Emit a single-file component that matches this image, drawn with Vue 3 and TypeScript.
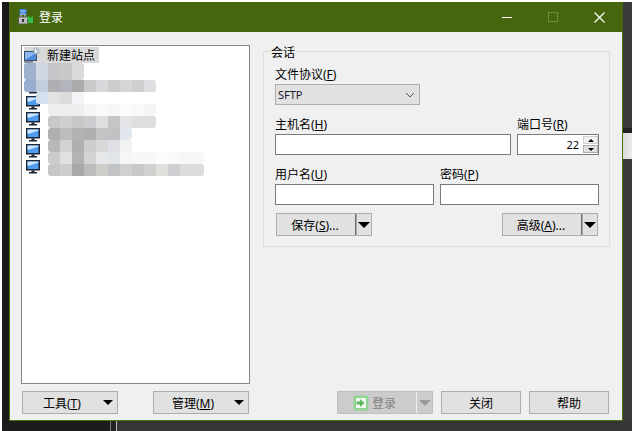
<script setup lang="ts">
interface MosaicRow { h: number; left: number; cells: string[] }

const mosaic: MosaicRow[] = [
  { h: 17, left: 2, cells: ['#9fb1cb', '#d0d6e2', '#c6c6ca', '#c8c8c8', '#dadada'] },
  { h: 12, left: 2, cells: ['#97aed0', '#c3cedd', '#b0b0b4', '#b3b5bc', '#acaaaa', '#cccac8', '#d8d8dc', '#cccccc', '#d8d6d5', '#d0cecc', '#dedfe3'] },
  { h: 12, left: 14, cells: ['#d5dfee', '#e2e2e2', '#dcdcdc', '#f3f4f7'] },
  { h: 12, left: 26, cells: ['#eeeeee', '#ededeb', '#eeeeee', '#f5f5f5', '#f9fafa', '#f5f6f6', '#fbfbfc', '#f9f9f7', '#f5f5f6'] },
  { h: 12, left: 26, cells: ['#c8c8c8', '#cfcfcf', '#c8c6c6', '#ccccd0', '#dedede', '#c6c4c4', '#e2e4e8', '#dedede', '#dedede'] },
  { h: 12, left: 26, cells: ['#b0b0b0', '#bdbdbd', '#b2b2b2', '#b0aeae', '#c2c3c5', '#c2c2c4', '#e2e6ed'] },
  { h: 12, left: 26, cells: ['#b8b8b8', '#d2d2d2', '#b0b0b0', '#cdcdcb', '#d8d8d8', '#dfe0e5', '#f1f2f4'] },
  { h: 12, left: 26, cells: ['#cccccc', '#e0e0e0', '#b3b3b3', '#d3d3d1', '#e6e7e9', '#e2e5ea', '#f6f6f7', '#f8f8f8', '#f8f8f8', '#fbfbfb', '#f9f9f9', '#f7f7f7', '#f7f7f7'] },
  { h: 12, left: 26, cells: ['#c6c6c6', '#cdcdcd', '#a9a9a9', '#bcbcbc', '#cfcdc9', '#c1c3c5', '#d0d0d0', '#c6c8ca', '#d2d0cf', '#e1dfdb', '#cdcfd2', '#dcdada', '#dcdcdc'] },
]

const sites = [1, 2, 3, 4, 5, 6, 7]
</script>

<template>
  <div class="screen">
    <div class="desk">
      <div class="strip-left"></div>
      <div class="window">
        <header class="titlebar">
          <svg class="app-icon" width="16" height="16" viewBox="0 0 16 16">
            <rect x="1.5" y="0" width="7" height="6" fill="#3f7fe0" />
            <rect x="2.5" y="1" width="5" height="2" fill="#7fb0f5" />
            <path d="M3 8V6.5a2 2 0 0 1 4 0V8" fill="none" stroke="#c9c9c9" stroke-width="1.2" />
            <rect x="0.5" y="8" width="9" height="7" fill="#bdbdbd" stroke="#555" stroke-width="0.8" />
            <rect x="4" y="10" width="2" height="3" fill="#333" />
            <path d="M9 8l2-1 1 2 3-2v7H9l2-2-2-2z" fill="#2fbf4a" />
          </svg>
          <span class="title-text">登录</span>
          <div class="controls">
            <div class="ctl"><span class="ctl-min"></span></div>
            <div class="ctl"><span class="ctl-max"></span></div>
            <div class="ctl">
              <svg width="11" height="11" viewBox="0 0 11 11">
                <path d="M0.5 0.5l10 10M10.5 0.5l-10 10" stroke="#fff" stroke-width="1.2" fill="none" />
              </svg>
            </div>
          </div>
        </header>

        <div class="body">
          <section class="left">
            <div class="tree">
              <div class="tree-row">
                <div class="tree-head">
                  <svg width="16" height="16" viewBox="0 0 16 16">
                    <rect x="0.5" y="4.5" width="12" height="9" fill="#8db8ee" stroke="#3b4d66" />
                    <path d="M1 13l11-7v7z" fill="#4d8ad8" />
                    <path d="M0 15h9" stroke="#3b4d66" />
                    <path d="M11.5 0.5l1 2 2.3-.4-1 2 1.4 1.6-2.3.2-1 2-1-2-2-.4 1.5-1.5-.6-2.2z" fill="#e8edf5" stroke="#7d8fa8" stroke-width="0.7" />
                  </svg>
                  <span class="tree-label">新建站点</span>
                </div>
              </div>
              <div v-for="s in sites" :key="s" class="tree-row">
                <svg class="monitor" width="14" height="14" viewBox="0 0 14 14">
                  <rect x="0.5" y="0.5" width="13" height="9.5" fill="#1d2733" stroke="#1d2733" />
                  <rect x="1.5" y="1.5" width="11" height="7.5" fill="#4f9cf0" />
                  <path d="M1.5 6l11-3.5V1.5h-11z" fill="#cfe6ff" />
                  <rect x="5.5" y="10.5" width="3" height="1.5" fill="#1d2733" />
                  <rect x="3" y="12" width="8" height="1.5" fill="#1d2733" />
                </svg>
              </div>
              <div class="mosaic">
                <div
                  v-for="(row, i) in mosaic"
                  :key="i"
                  class="mosaic-row"
                  :style="{ height: row.h + 'px', marginLeft: row.left + 'px' }"
                >
                  <i
                    v-for="(c, j) in row.cells"
                    :key="j"
                    class="cell"
                    :style="{ background: c }"
                  ></i>
                </div>
              </div>
            </div>
            <div class="btn-row left-btns">
              <button class="btn menu tools">
                <span class="menu-text">工具(<u>T</u>)</span>
                <span class="arrow"></span>
              </button>
              <button class="btn menu manage">
                <span class="menu-text">管理(<u>M</u>)</span>
                <span class="arrow"></span>
              </button>
            </div>
          </section>

          <section class="right">
            <div class="group">
              <span class="legend">会话</span>
              <label class="lbl">文件协议(<u>F</u>)</label>
              <div class="select">
                <span class="select-value">SFTP</span>
                <svg width="10" height="6" viewBox="0 0 10 6">
                  <path d="M1 1l4 4 4-4" fill="none" stroke="#555" stroke-width="1" />
                </svg>
              </div>

              <div class="host-grid">
                <div class="field">
                  <label class="lbl">主机名(<u>H</u>)</label>
                  <input class="input" type="text" />
                </div>
                <div class="field">
                  <label class="lbl">端口号(<u>R</u>)</label>
                  <div class="port">
                    <span class="port-value">22</span>
                    <div class="spin">
                      <span class="spin-btn up"><b></b></span>
                      <span class="spin-btn down"><b></b></span>
                    </div>
                  </div>
                </div>
              </div>

              <div class="user-grid">
                <div class="field">
                  <label class="lbl">用户名(<u>U</u>)</label>
                  <input class="input" type="text" />
                </div>
                <div class="field">
                  <label class="lbl">密码(<u>P</u>)</label>
                  <input class="input" type="password" />
                </div>
              </div>

              <div class="group-btns">
                <button class="btn split">
                  <span class="split-text">保存(<u>S</u>)...</span>
                  <span class="split-sep"></span>
                  <span class="arrow"></span>
                </button>
                <button class="btn split">
                  <span class="split-text">高级(<u>A</u>)...</span>
                  <span class="split-sep"></span>
                  <span class="arrow"></span>
                </button>
              </div>
            </div>

            <div class="btn-row right-btns">
              <button class="btn login" disabled>
                <svg class="login-icon" width="16" height="16" viewBox="0 0 16 16">
                  <rect x="0.5" y="0.5" width="15" height="15" rx="2" fill="#8fd48f" />
                  <rect x="3" y="3" width="10" height="10" fill="#f2f7f2" />
                  <path d="M3.5 6.5h3.5V4l4.5 4-4.5 4V9.5H3.5z" fill="#5cb85c" />
                </svg>
                <span class="login-text">登录</span>
                <span class="login-sep"></span>
                <span class="login-arrow"></span>
              </button>
              <button class="btn plain">关闭</button>
              <button class="btn plain">帮助</button>
            </div>
          </section>
        </div>
      </div>
      <div class="strip-right">
        <div class="sr-a"></div>
        <div class="sr-b"></div>
        <div class="sr-c"></div>
        <div class="sr-d"></div>
      </div>
      <div class="strip-bottom">
        <div class="sb-a"></div>
        <div class="sb-l1"></div>
        <div class="sb-b"></div>
        <div class="sb-l2"></div>
        <div class="sb-c"></div>
      </div>
    </div>
  </div>
</template>

<style scoped>
* { box-sizing: border-box; }

.screen {
  width: 632px;
  height: 431px;
  overflow: hidden;
  background: #fff;
  padding: 2px 0 0 2px;
  font-family: "Noto Sans", "Noto Sans CJK SC", sans-serif;
  font-size: 12px;
  line-height: 16px;
  color: #000;
}

.desk {
  display: grid;
  grid-template-columns: 7px 614px 9px;
  grid-template-rows: 419px 10px;
  width: 630px;
  height: 429px;
  background: #333;
}

.strip-left { background: #1a1a1a; }

.strip-right { display: flex; flex-direction: column; background: #3a3a3a; }
.sr-a { height: 126px; background: #3a3a3a; }
.sr-b { height: 5px; background: #222; }
.sr-c { height: 26px; background: linear-gradient(90deg, #d8d8d8, #ececec); }
.sr-d { flex: 1; background: #3a3a3a; }

.strip-bottom { grid-column: 1 / 4; display: flex; }
.sb-a { width: 108px; background: #1c1c1c; }
.sb-l1 { width: 1px; background: #777; }
.sb-b { width: 5px; background: #222; }
.sb-l2 { width: 1px; background: #bbb; }
.sb-c { flex: 1; background: #353535; }

.window { display: flex; flex-direction: column; min-width: 0; }

.titlebar {
  display: flex;
  align-items: center;
  height: 30px;
  flex: none;
  background: #45660c;
  padding-left: 9px;
  color: #fff;
}
.app-icon { flex: none; }
.title-text { margin-left: 5px; padding-top: 2px; color: #fff; }
.controls { display: flex; margin-left: auto; margin-right: 1px; height: 100%; }
.ctl { width: 46px; display: flex; align-items: center; justify-content: center; }
.ctl-min { display: block; width: 10px; height: 1px; background: #fff; }
.ctl-max { display: block; width: 10px; height: 10px; border: 1px solid #6f8d42; }

.body {
  flex: 1;
  display: flex;
  gap: 13px;
  background: #f0f0f0;
  border: 1px solid #4c7310;
  border-top: 0;
  padding: 13px 12px 6px 11px;
  min-height: 0;
}

.left { width: 229px; display: flex; flex-direction: column; flex: none; }

.tree {
  position: relative;
  height: 339px;
  background: #fff;
  border: 1px solid #828790;
  padding: 1px 0 0 2px;
}
.tree-row { height: 16px; display: flex; align-items: center; }
.tree-head { display: flex; align-items: center; height: 16px; width: 75px; background: #d9d9d9; }
.tree-label { margin-left: 7px; padding-top: 2px; }
.monitor { margin-left: 2px; }

.mosaic { position: absolute; left: 0; top: 17px; }
.mosaic-row { display: flex; border-radius: 3px; overflow: hidden; width: fit-content; }
.cell { display: block; width: 12px; height: 100%; }

.btn-row { display: flex; margin-top: 7px; }
.left-btns { justify-content: space-between; padding: 0 1px; }

.btn {
  display: flex;
  align-items: center;
  height: 23px;
  padding: 0;
  background: #e1e1e1;
  border: 1px solid #adadad;
  font: inherit;
  color: #000;
}

.menu { position: relative; width: 96px; }
.menu-text { position: absolute; top: 4px; white-space: nowrap; }
.tools .menu-text { left: 20px; }
.manage .menu-text { left: 18px; }
.menu .arrow { margin-left: auto; margin-right: 4px; }

.arrow {
  display: block;
  flex: none;
  width: 0;
  height: 0;
  border-left: 5px solid transparent;
  border-right: 5px solid transparent;
  border-top: 5px solid #000;
}

.right { flex: 1; min-width: 0; display: flex; flex-direction: column; }

.group {
  position: relative;
  margin-top: 6px;
  height: 196px;
  border: 1px solid #dcdcdc;
  padding: 14px 10px 0 11px;
}
.legend {
  position: absolute;
  left: 6px;
  top: -7px;
  padding: 0 1px;
  background: #f0f0f0;
}

.lbl { display: block; height: 18px; line-height: 18px; white-space: nowrap; }

.select {
  display: flex;
  align-items: center;
  justify-content: space-between;
  width: 145px;
  height: 21px;
  padding: 0 4px 0 2px;
  background: #e1e1e1;
  border: 1px solid #adadad;
  color: #1a1a2e;
}
.select-value { font-size: 11px; padding-top: 1px; }

.host-grid {
  display: grid;
  grid-template-columns: 236px 82px;
  gap: 6px;
  margin-top: 11px;
}
.user-grid {
  display: grid;
  grid-template-columns: 159px 159px;
  gap: 6px;
  margin-top: 11px;
}

.input {
  display: block;
  width: 100%;
  height: 21px;
  padding: 0;
  border: 1px solid #7a7a7a;
  border-radius: 0;
  background: #fff;
  outline: none;
}

.port {
  display: flex;
  align-items: center;
  height: 21px;
  background: #fff;
  border: 1px solid #7a7a7a;
}
.port-value { margin-left: auto; margin-right: 4px; font-size: 11px; padding-top: 1px; }
.spin { display: flex; flex-direction: column; gap: 1px; width: 15px; flex: none; }
.spin-btn {
  display: flex;
  align-items: center;
  justify-content: center;
  height: 8px;
  background: #f0f0f0;
  border: 1px solid #d0d0d0;
}
.spin-btn.down { background: #e1e1e1; border-color: #adadad; }
.spin-btn b {
  display: block;
  width: 0;
  height: 0;
  border-left: 3px solid transparent;
  border-right: 3px solid transparent;
}
.up b { border-bottom: 3px solid #000; }
.down b { border-top: 3px solid #000; }

.group-btns {
  display: flex;
  justify-content: space-between;
  margin-top: 8px;
  padding: 0 1px;
}
.split { width: 96px; }
.split-text { width: 76px; margin-right: 2px; padding-top: 2px; text-align: center; white-space: nowrap; }
.split-sep { width: 2px; height: 21px; background: linear-gradient(90deg, #6e6e6e 50%, #a8a8a8 50%); }
.split .arrow {
  margin-left: 1px;
  border-left-width: 6px;
  border-right-width: 6px;
  border-top-width: 6px;
}

.right-btns { margin-top: auto; justify-content: flex-end; gap: 8px; padding-right: 1px; }
.plain { width: 80px; justify-content: center; padding-top: 2px; }

.login {
  width: 96px;
  background: #cccccc;
  border-color: #bfbfbf;
  padding-left: 15px;
  color: #838383;
}
.login-icon { flex: none; }
.login-text { margin-left: 3px; padding-top: 2px; color: #838383; }
.login-sep { width: 1px; height: 21px; background: #f0f0f0; margin-left: 20px; }
.login-arrow {
  display: block;
  width: 0;
  height: 0;
  margin-left: 2px;
  border-left: 6px solid transparent;
  border-right: 6px solid transparent;
  border-top: 6px solid #9a9a9a;
}
</style>
